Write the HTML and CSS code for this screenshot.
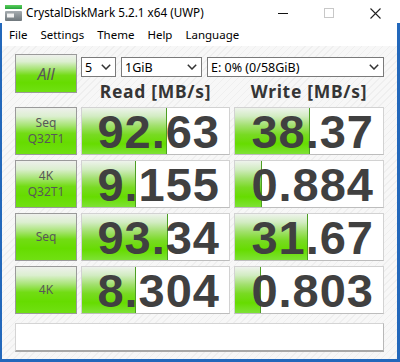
FILE: index.html
```html
<!DOCTYPE html>
<html>
<head>
<meta charset="utf-8">
<title>CrystalDiskMark</title>
<link rel="stylesheet" href="styles.css">
</head>
<body>
<div class="window">
  <div class="titlebar">
    <svg class="app-icon" width="17" height="16" viewBox="0 0 17 16">
      <defs>
        <linearGradient id="gbar" x1="0" y1="0" x2="0" y2="1">
          <stop offset="0" stop-color="#5ccf5c"/>
          <stop offset="1" stop-color="#25a23a"/>
        </linearGradient>
        <linearGradient id="gdrive" x1="0" y1="0" x2="0" y2="1">
          <stop offset="0" stop-color="#a6acb0"/>
          <stop offset="1" stop-color="#6f777c"/>
        </linearGradient>
      </defs>
      <rect x="0" y="0" width="17" height="4" fill="url(#gbar)"/>
      <rect x="0" y="6" width="17" height="10" rx="1" fill="url(#gdrive)"/>
      <rect x="2" y="8.5" width="7" height="4" fill="#f2f2f2"/>
    </svg>
    <span class="title">CrystalDiskMark 5.2.1 x64 (UWP)</span>
    <div class="controls">
      <div class="ctl">
        <svg width="10" height="10" viewBox="0 0 10 10"><rect x="0" y="5" width="10" height="1" fill="#111"/></svg>
      </div>
      <div class="ctl">
        <svg width="10" height="10" viewBox="0 0 10 10"><rect x="0.5" y="0.5" width="9" height="9" fill="none" stroke="#c8c8c8" stroke-width="1"/></svg>
      </div>
      <div class="ctl">
        <svg width="11" height="11" viewBox="0 0 11 11"><path d="M0.5 0.5 L10.5 10.5 M10.5 0.5 L0.5 10.5" stroke="#222" stroke-width="1.1" fill="none"/></svg>
      </div>
    </div>
  </div>
  <div class="frame">
    <div class="menubar">
      <span>File</span>
      <span>Settings</span>
      <span>Theme</span>
      <span>Help</span>
      <span>Language</span>
    </div>
    <div class="content">
      <div class="top">
        <div class="btn all">All</div>
        <div class="top-right">
          <div class="selects">
            <div class="select s1"><span class="sel-text">5</span>
              <svg class="chev" width="10" height="6" viewBox="0 0 10 6"><path d="M0.8 0.8 L5 5 L9.2 0.8" stroke="#333" stroke-width="1.5" fill="none"/></svg></div>
            <div class="select s2"><span class="sel-text">1GiB</span>
              <svg class="chev" width="10" height="6" viewBox="0 0 10 6"><path d="M0.8 0.8 L5 5 L9.2 0.8" stroke="#333" stroke-width="1.5" fill="none"/></svg></div>
            <div class="select s3"><span class="sel-text">E: 0% (0/58GiB)</span>
              <svg class="chev" width="10" height="6" viewBox="0 0 10 6"><path d="M0.8 0.8 L5 5 L9.2 0.8" stroke="#333" stroke-width="1.5" fill="none"/></svg></div>
          </div>
          <div class="headers">
            <div>Read [MB/s]</div>
            <div>Write [MB/s]</div>
          </div>
        </div>
      </div>
      <div class="results">
        <div class="btn label">Seq<br>Q32T1</div>
        <div class="cell"><div class="bar" style="width:58%"></div><span class="val">92.63</span></div>
        <div class="cell"><div class="bar" style="width:51%"></div><span class="val">38.37</span></div>

        <div class="btn label">4K<br>Q32T1</div>
        <div class="cell"><div class="bar" style="width:37%"></div><span class="val">9.155</span></div>
        <div class="cell"><div class="bar" style="width:18%"></div><span class="val">0.884</span></div>

        <div class="btn label">Seq</div>
        <div class="cell"><div class="bar" style="width:58.5%"></div><span class="val">93.34</span></div>
        <div class="cell"><div class="bar" style="width:49%"></div><span class="val">31.67</span></div>

        <div class="btn label">4K</div>
        <div class="cell"><div class="bar" style="width:37%"></div><span class="val">8.304</span></div>
        <div class="cell"><div class="bar" style="width:17.5%"></div><span class="val">0.803</span></div>
      </div>
      <div class="status"></div>
    </div>
  </div>
</div>
</body>
</html>
```
FILE: styles.css
```css
* { box-sizing: border-box; }

body {
  margin: 0;
  width: 400px;
  height: 362px;
  overflow: hidden;
  background: #fff;
  font-family: "Noto Sans", "Liberation Sans", sans-serif;
  color: #000;
}

.window {
  width: 400px;
  height: 362px;
  display: flex;
  flex-direction: column;
}

.titlebar {
  height: 23px;
  display: flex;
  align-items: center;
  background: #fff;
}

.app-icon {
  margin-left: 5px;
  margin-top: 2px;
  flex: none;
}

.title {
  margin-left: 4px;
  font-size: 11.7px;
  line-height: 16px;
  margin-top: 1px;
}

.controls {
  margin-left: auto;
  margin-right: 2px;
  display: flex;
  height: 23px;
}

.ctl {
  width: 46px;
  height: 23px;
  display: flex;
  align-items: center;
  justify-content: center;
  padding-top: 3px;
}

.frame {
  flex: 1;
  display: flex;
  flex-direction: column;
  border-left: 2px solid #2368bb;
  border-right: 3px solid #2368bb;
  border-bottom: 3px solid #2368bb;
}

.menubar {
  height: 23px;
  display: flex;
  align-items: center;
  gap: 13px;
  padding-left: 7px;
  font-size: 11.5px;
  background: #fff;
}

.content {
  flex: 1;
  padding: 8px 0 0 13px;
  background: repeating-linear-gradient(135deg, #f7f7f7 0 4px, #efefef 4px 5px);
}

.top {
  display: flex;
  gap: 4px;
  height: 53px;
}

.btn {
  border: 1px solid #9a9a9a;
  background: linear-gradient(to bottom, #eef0ec 0%, #dcefd0 18%, #a6e472 38%, #72dc14 55%, #66dc00 75%, #70e012 100%);
  display: flex;
  flex-direction: column;
  align-items: center;
  justify-content: center;
  color: #585858;
  text-align: center;
}

.all {
  width: 62px;
  height: 39px;
  font-size: 16px;
  font-style: italic;
}

.top-right {
  display: flex;
  flex-direction: column;
}

.selects {
  display: flex;
  gap: 5px;
  margin-top: 3px;
  height: 20px;
}

.select {
  height: 20px;
  border: 1px solid #7a7a7a;
  background: #fff;
  display: flex;
  align-items: center;
  padding: 0 4px 0 3px;
  font-size: 12.5px;
}

.s1 { width: 35px; }
.s2 { width: 81px; }
.s3 { width: 177px; }

.sel-text {
  flex: 1;
  white-space: nowrap;
}

.chev { flex: none; }

.headers {
  display: grid;
  grid-template-columns: 149px 150px;
  column-gap: 4px;
  margin-top: 4px;
  font-size: 17.5px;
  line-height: 20px;
  font-weight: 700;
  letter-spacing: 0.7px;
  color: #353535;
  text-align: center;
}

.results {
  display: grid;
  grid-template-columns: 62px 149px 150px;
  grid-auto-rows: 48px;
  column-gap: 4px;
  row-gap: 5px;
}

.label {
  font-size: 12px;
  line-height: 16px;
}

.cell {
  position: relative;
  border: 1px solid #d2d2d2;
  border-bottom-color: #bdbdbd;
  background: #fff;
  display: flex;
  align-items: center;
  justify-content: flex-end;
  padding: 0 9px 0 0;
}

.bar {
  position: absolute;
  left: 0;
  top: 0;
  bottom: 0;
  border-right: 1px solid #4c9e22;
  background: linear-gradient(to bottom, #eef3ec 0%, #d2ecc2 18%, #a2e06e 38%, #78da22 58%, #66dc00 78%, #7ee236 100%);
}

.val {
  position: relative;
  font-family: "Liberation Sans", "Noto Sans", sans-serif;
  font-size: 47px;
  line-height: 1;
  font-weight: 700;
  color: #404040;
  letter-spacing: 1px;
}

.status {
  margin-top: 9px;
  width: 369px;
  height: 29px;
  background: #fff;
  border: 1px solid #d4d4d4;
  border-right-color: #b8b8b8;
  border-bottom: 2px solid #a8a8a8;
}
```
